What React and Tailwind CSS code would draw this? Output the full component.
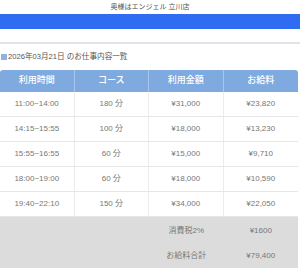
const rows = [
  { time: '11:00~14:00', course: '180 分', price: '¥31,000', pay: '¥23,820' },
  { time: '14:15~15:55', course: '100 分', price: '¥18,000', pay: '¥13,230' },
  { time: '15:55~16:55', course: '60 分', price: '¥15,000', pay: '¥9,710' },
  { time: '18:00~19:00', course: '60 分', price: '¥18,000', pay: '¥10,590' },
  { time: '19:40~22:10', course: '150 分', price: '¥34,000', pay: '¥22,050' },
];

const font = { fontFamily: '"Liberation Sans", "Noto Sans CJK JP", sans-serif' };

function App() {
  return (
    <div className="w-[300px] h-[272px] overflow-hidden bg-white" style={font}>
      <div className="h-[14px] flex items-center justify-center text-[7px] text-[#555]">
        奥様はエンジェル 立川店
      </div>
      <div className="h-[15px] bg-[#2f6cf2]" />
      <div className="h-[13px]" />
      <div className="h-[2px] bg-[#dfe5ea]" />
      <div className="h-[26px] flex items-center text-[7.6px] text-[#555]">
        <span className="w-[6px] h-[6px] bg-[#8fb3df] ml-[1px] mr-[1px]" />
        <span>2026年03月21日 のお仕事内容一覧</span>
      </div>
      <div className="w-[298px]">
        <div className="grid grid-cols-4 h-[22px] bg-[#7eaae0] rounded-t-[3px] text-white text-[9px] font-medium">
          <div className="flex items-center justify-center border-r border-[#a9c6ec]">利用時間</div>
          <div className="flex items-center justify-center border-r border-[#a9c6ec]">コース</div>
          <div className="flex items-center justify-center border-r border-[#a9c6ec]">利用金額</div>
          <div className="flex items-center justify-center">お給料</div>
        </div>
        {rows.map((r) => (
          <div key={r.time} className="grid grid-cols-4 h-[25px] border-b border-[#e6e6e6] text-[8px] text-[#777]">
            <div className="flex items-center justify-center border-r border-[#ececec]">{r.time}</div>
            <div className="flex items-center justify-center border-r border-[#ececec]">{r.course}</div>
            <div className="flex items-center justify-center border-r border-[#ececec]">{r.price}</div>
            <div className="flex items-center justify-center">{r.pay}</div>
          </div>
        ))}
        <div className="bg-[#dcdcdc] text-[8px] text-[#777] pt-[1px]">
          <div className="grid grid-cols-4 h-[25px]">
            <div />
            <div />
            <div className="flex items-center justify-center">消費税2%</div>
            <div className="flex items-center justify-center">¥1600</div>
          </div>
          <div className="grid grid-cols-4 h-[25px]">
            <div />
            <div />
            <div className="flex items-center justify-center">お給料合計</div>
            <div className="flex items-center justify-center">¥79,400</div>
          </div>
        </div>
      </div>
    </div>
  );
}

export default App;
